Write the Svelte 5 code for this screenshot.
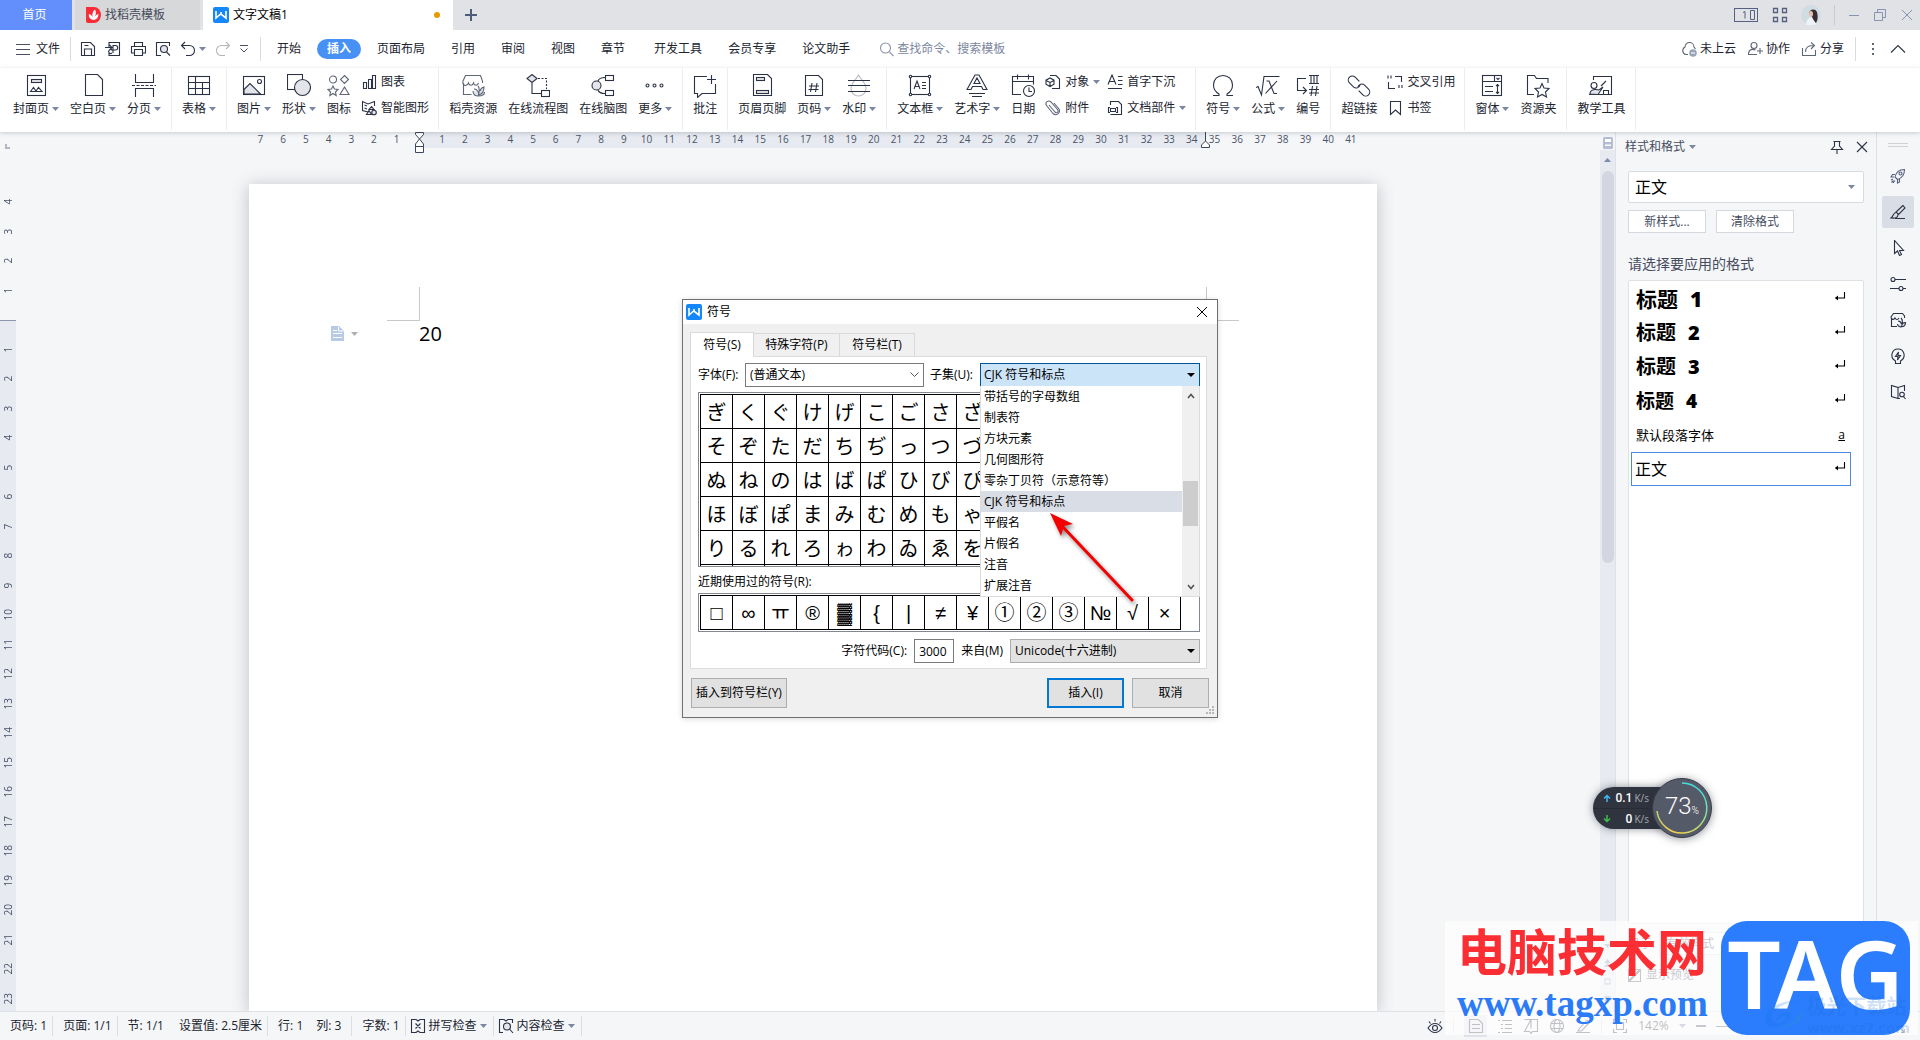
<script>
  const tabsMain = ['开始', '插入', '页面布局', '引用', '审阅', '视图', '章节'];
  const tabsExtra = ['开发工具', '会员专享', '论文助手'];

  const G = 'fill="#e3e5ea"';
  const icons = {
    cover: `<rect x="3.500" y="1.500" width="18" height="20"/><rect x="7.500" y="5.500" width="10" height="3" ${G}/><path d="M6.500 17.500l3-4 2.500 3.500 2.500-3.500 3.500 4z"/>`,
    blank: `<path d="M4.500.5h12l5 5v16h-17z"/>`,
    split: `<path d="M3.500 0v8.500h18V0M3.500 23v-8.500h18V23"/><path d="M0 11.500h24" stroke-dasharray="3 1.500"/>`,
    table: `<rect x="1.500" y="2.500" width="21" height="18"/><path d="M1.500 8.500h21M1.500 14.500h21M8.500 2.500v18M15.500 8.500v12"/>`,
    pic: `<rect x="1.500" y="2.500" width="21" height="18"/><path d="M2 15.500l6-6 10.500 10.500H2z" ${G}/><circle cx="17.500" cy="7.500" r="2"/>`,
    shape: `<rect x=".5" y=".5" width="15" height="15"/><circle cx="15.500" cy="13.500" r="8" ${G}/>`,
    iconset: `<g stroke="#5f6677"><circle cx="6" cy="5.500" r="3.500"/><path d="M17.500 1.500l4 4-4 4-4-4zM17.500 13l4.500 7.500h-9zM6 12l1.500 3 3.500.5-2.500 2.500.7 3.500L6 19.500 2.800 21.500l.7-3.500L1 15.500l3.500-.5z"/></g>`,
    docer: `<g stroke="#5f6677"><path d="M2.500 9v11.500h8M21.500 9V7l-2-5.500h-15L2 7c-1 5 4 6 5.500 2 1 3 4 3 5 0 1 3 4 3 5 0"/><path d="M13 15c3 0 4 2 4.500 4.500M17 12c2 2 1.500 5 .5 9 4-1 5.500-3 5.500-8-2 .5-3.500 2-4 4M12 17c0 3 2 5 5.500 5 4 0 6-2 6-4" ${G}/></g>`,
    flow: `<path d="M6 .5l5 4-5 4-5-4z" ${G}/><path d="M6 9v10.500h9"/><rect x="15.500" y="16.500" width="8" height="6"/><path d="M12 4.500h8.500V15" stroke-dasharray="2 1.500"/>`,
    mind: `<circle cx="5.500" cy="11.500" r="4.500" ${G}/><path d="M7 7c1-3 3-3.500 7-3.500M7 16c1 3 3 3.500 7 3.500"/><rect x="14.500" y="1.500" width="8" height="5"/><rect x="14.500" y="16.500" width="8" height="5"/>`,
    more: `<circle cx="4.500" cy="11.500" r="1.500"/><circle cx="11.500" cy="11.500" r="1.500"/><circle cx="18.500" cy="11.500" r="1.500"/>`,
    note: `<path d="M14 2.500H1.500v17h3v4l4.500-4h13.500V10M18.500 1v9M14 5.500h9"/>`,
    hf: `<path d="M3.500.5h14l4 4v17h-18z"/><rect x="6.500" y="3.500" width="8" height="3" ${G}/><rect x="6.500" y="16.500" width="12" height="3" ${G}/>`,
    pageno: `<path d="M3.500 1.500h13l4 4v16h-17z"/><path d="M10 9l-1.500 9M15 9l-1.500 9M7 12h10M6.500 15.500h10"/>`,
    water: `<path d="M11.500 1C9 6 4 9 4 14.500a7.500 7.500 0 0015 0C19 9 14 6 11.500 1z" stroke="#b9bcc6"/><path d="M1 6.500h22M1 11.500h22M1 17.500h22"/>`,
    textbox: `<rect x="2.500" y="2.500" width="19" height="18"/><path d="M6 15l3-8 3 8M7 12.500h4M14 8.500h4M14 11.500h4M14 14.500h4"/><g fill="#fff"><circle cx="2.500" cy="2.500" r="1.200"/><circle cx="21.500" cy="2.500" r="1.200"/><circle cx="2.500" cy="20.500" r="1.200"/><circle cx="21.500" cy="20.500" r="1.200"/></g>`,
    art: `<path d="M2 15.500L10 1h4l8 14.500h-4l-1.500-3h-9l-1.500 3zM9 9.500h6L12 4z"/><path d="M4 19.500h16M7 22.500h10"/>`,
    date: `<path d="M10 20.500H1.500v-18h21v8M1.500 7.500h21M6.500.5v5M17.500.5v5"/><circle cx="18" cy="17" r="5.500"/><path d="M18 13.500v4h3"/>`,
    omega: `<path d="M2 21.500h6V20C4.500 18 2.500 15 2.500 11c0-5.500 4-9.500 9.500-9.500s9.500 4 9.500 9.500c0 4-2 7-5.500 9v1.500h6"/>`,
    formula: `<path d="M0 13.500l2-1 3.500 8.500L8 2.500h15.500M10.500 7h2.500l5 12.500H21M21 7L9.500 19.500"/>`,
    number: `<path d="M10 4.500H1.500v12h8.500M7 13l3.500 3.500L7 20M13 1.500h10M13 9.500h10M15 1.500v8M18 1.500v8M21 1.500v8M16.500 12l-1.500 10M21 12l-1.500 10M13 15.500h10M13 19h10"/>`,
    link: `<g transform="rotate(45 12 12)"><path d="M9 8.500H3a4 4 0 000 8h6a4 4 0 003-6M15 15.500h6a4 4 0 000-8h-6a4 4 0 00-3 6"/></g>`,
    form: `<rect x="2.500" y="1.500" width="19" height="20"/><path d="M2.500 7.500h19M14.500 1.500v6M16.500 4l1.500 1.500L19.500 4M5 12.500h8M5 17.500h8M17.500 10.500v9M16 12l1.500-1.500L19 12M16 18l1.500 1.500L19 18"/>`,
    folder: `<path d="M8 20.500H1.500V1.500h7l2 3h11.500V9"/><path d="M16 9.500l2 4.500 5 .5-3.500 3.500 1 5-4.500-2.500-4.500 2.500 1-5L9 14.500l5-.5z"/>`,
    teach: `<path d="M4.500 6V2.500h18v18H0"/><circle cx="5" cy="11.500" r="3"/><path d="M1 20c0-5 6-5 9-4l4-3-5 7.500z" ${G}/><path d="M12 12l5-5M14.500 20v-3.500h5V20"/>`
  };
  const small = {
    chart: `<path d="M2.500 8.500h3v6h-3zM7.500 5.500h3v9h-3zM11.500 1.500h3v13h-3z"/>`,
    smart: `<path d="M7 12l-5.500-1.500V1.500L7 4l6.500-2.500V6M3.500 5l2.500 1M3.500 8l2.500 1"/><path d="M10.500 6.500l2.500 3h-5zM8 10.500l2.500 4H5.500z" ${G}/><circle cx="13" cy="12.500" r="2.300" ${G}/>`,
    object: `<path d="M5 1.500h6l3.500 3.500v9.500H7"/><path d="M5 4l4 2.200v4L5 12.500 1 10.200v-4zM1 6.500l4 2 4-2M5 8.500v4"/>`,
    clip: `<path d="M4 5l6 7c2 2 4-.5 2.500-2.500L6 2C3.500-.5-.5 2.500 1.500 5.500L8 13.500c3 3 8-.5 6-4.500L9 3" stroke="#5f6677"/>`,
    dropcap: `<path d="M1 10.500l4-9.500 4 9.500M2.500 7.500h5M11 2.500h4.500M11 6.500h4.500M11 10.500h4.500M1 14.500h14"/>`,
    parts: `<path d="M3.500 5V1.500h8l3 3v10h-11"/><path d="M3 7.500h-1.500v5H3M9 7.500h1.500v5H9M3.500 8.500h5v3h-5z"/>`,
    cross: `<path d="M8 2.500h6.500V8M1.500 8v6.500H8M1 1.500v3M4 1.500v3M12 11v3M15 11v3"/>`,
    mark: `<path d="M3.500 1.500h10v13l-5-4.500-5 4.500z"/>`,
    save: `<path d="M1.500 14.500v-13h9l4 4v9zM4.500 14v-6h7v6M4.500 4.500h4"/>`,
    export: `<path d="M4 6V1.500h10.500v13H4V11M0 6.500h6.500M4.500 4l2.500 2.500L4.500 9M8 12V4.500h2.500a2 2 0 010 4.500H7a2 2 0 100 3"/>`,
    print: `<path d="M4.500 5V1.500h8V5M4.500 12h-3V5.500h14V12h-3M4.500 8.500h8v6h-8z"/>`,
    preview: `<path d="M6 14.500H1.500v-13h13V5"/><circle cx="9" cy="8" r="3.500" ${G}/><path d="M11.500 11l3.500 3.500"/>`,
    undo: `<path d="M5 1L1.500 4.500 5 8M2 4.500h7.500a5 5 0 010 10H6"/>`,
    redo: `<path d="M11 1l3.500 3.500L11 8M14 4.500H6.500a5 5 0 000 10H10" stroke="#b3b5bb"/>`,
    cloud: `<path d="M7 13.500H5a4 4 0 01-1-7.500 4.500 4.500 0 019 0l1.500 2" stroke="#5f6677"/><circle cx="12" cy="12" r="3.800" fill="#9aa3b8" stroke="none"/><path d="M10 12h4" stroke="#fff"/>`,
    person: `<circle cx="7" cy="4.500" r="3" stroke="#5f6677"/><path d="M10 13.500H1.500c0-6 5-5.500 7-4.500M13 7v6M10 10h6" stroke="#5f6677"/>`,
    share: `<path d="M1.500 7v7.500h13V9M4.500 11c0-5 3-6.500 8-6.500M10 1.500l3.500 3L10 8" stroke="#5f6677"/>`,
    search: `<circle cx="6.500" cy="7" r="5" stroke="#8a93ab"/><path d="M10.500 11l4 4" stroke="#8a93ab"/>`,
    rocket: `<path d="M5 9c1-5 4-7.500 9.500-7.500C14.500 7 12 10 7.500 11.500zM5 6.500H2.500L1 9h3M9.500 11v3L7.500 15v-3M1 12l2-1M3 15l2-2.500M1.500 14.500l2-2" stroke="#56617f"/><circle cx="10.500" cy="5.500" r="1.500" stroke="#56617f"/>`,
    brush: `<path d="M13 1.500L6 8l2.500 2.500L15 4zM6 8.500c-3 0-2 3.500-5 5.500 4 .5 7 0 7-3.500M5 14.500h10"/>`,
    cursor: `<path d="M4.500.5v13l3-2.500 2 4.500 2-1-2-4h4z"/>`,
    sliders: `<circle cx="3" cy="3.500" r="2"/><path d="M5 3.500h11M0 12.500h9M13 12.500h3"/><circle cx="11" cy="12.500" r="2"/>`,
    store: `<path d="M1.500 6v8.500H7M14.500 6V4l-2-2.500h-9L1 5c0 3 3 3 4 1 1 2 3 2 4 0"/><path d="M8 9c2 0 3 1 3.500 3M11 6c2 2 2 4 .5 8.500M7.500 12c0 4 8 4 8-1.500-2 0-3 .5-3.500 2" ${G}/>`,
    bulb: `<path d="M5.500 15.500v-2.500C-.5 9.500 1.500 1 8 1s8.500 8.500 2.500 12v2.500zM8.500 4L5.500 8.500H8L7.500 12l3-4.500H8z"/>`,
    book: `<path d="M8 14V3.500L1.500 1.500v11L8 14.500h2M8 3.500l6.500-2V7"/><circle cx="12" cy="10.500" r="2.300"/><path d="M13.500 12.500L15.500 15"/>`,
    spell: `<path d="M6 1.500H1.500v13H6M10 1.500h4.500v13H10M6 1.500l2 1.500 2-1.500M6 14.500L8 13l2 1.500M5.500 5.500l5 5M10.500 5.500l-5 5"/>`,
    check: `<path d="M5 14.500H1.500v-13H6l2 1.500 2-1.500h4.500V5"/><circle cx="9" cy="8.500" r="3.500" ${G}/><path d="M11.500 11l3.500 4"/>`,
    eye: `<path d="M1 10c4-6 10-6 14 0-4 6-10 6-14 0zM2 3.500l1.500 2M8 1v2.500M14 3.500l-1.500 2"/><circle cx="8" cy="10" r="2.500"/>`,
    doc: `<path d="M1.500 1.500h9l4 4v9h-13zM4 6.500h8M4 10.500h8"/>`,
    outline: `<path d="M1 2.500h2M5 2.500h10M4 6.500h2M8 6.500h7M4 10.500h2M8 10.500h7M1 14.500h2M5 14.500h10"/>`,
    read: `<path d="M1.500 1.500H8v9M8 1.500h6.500v12h-5L8 15.500l-1.500-2h-5z"/>`,
    globe: `<circle cx="8" cy="8" r="6.500"/><ellipse cx="8" cy="8" rx="3" ry="6.500"/><path d="M2 5.500h12M2 10.500h12"/>`,
    pen: `<path d="M4 11l8-9 2.500 2.500-8 8.500H3zM1 14.500h14"/>`,
    fit: `<path d="M1.500 5V1.500H5M11 1.500h3.500V5M14.500 11v3.500H11M5 14.500H1.500V11M4.500 4.500h7v7h-7z"/>`,
    full: `<path d="M1.500 5V1.500H5M11 1.500h3.500V5M14.500 11v3.500H11M5 14.500H1.500V11M2 2l4 4M14 2l-4 4M14 14l-4-4M2 14l4-4"/>`,
    enter: `<path d="M13.500 4v6h-9" stroke="#000"/><path d="M7 7.500v5L4 10z" fill="#000" stroke="none"/>`
  };

  const groups = [
    [{ t: '封面页', i: 'cover', c: 1 }, { t: '空白页', i: 'blank', c: 1 }, { t: '分页', i: 'split', c: 1 }],
    [{ t: '表格', i: 'table', c: 1 }],
    [{ t: '图片', i: 'pic', c: 1 }, { t: '形状', i: 'shape', c: 1 }, { t: '图标', i: 'iconset' }, { stack: [{ t: '图表', i: 'chart' }, { t: '智能图形', i: 'smart' }] }],
    [{ t: '稻壳资源', i: 'docer' }, { t: '在线流程图', i: 'flow' }, { t: '在线脑图', i: 'mind' }, { t: '更多', i: 'more', c: 1 }],
    [{ t: '批注', i: 'note' }],
    [{ t: '页眉页脚', i: 'hf' }, { t: '页码', i: 'pageno', c: 1 }, { t: '水印', i: 'water', c: 1 }],
    [{ t: '文本框', i: 'textbox', c: 1 }, { t: '艺术字', i: 'art', c: 1 }, { t: '日期', i: 'date' },
      { stack: [{ t: '对象', i: 'object', c: 1 }, { t: '附件', i: 'clip' }] },
      { stack: [{ t: '首字下沉', i: 'dropcap' }, { t: '文档部件', i: 'parts', c: 1 }] }],
    [{ t: '符号', i: 'omega', c: 1 }, { t: '公式', i: 'formula', c: 1 }, { t: '编号', i: 'number' }],
    [{ t: '超链接', i: 'link' }, { stack: [{ t: '交叉引用', i: 'cross' }, { t: '书签', i: 'mark' }] }],
    [{ t: '窗体', i: 'form', c: 1 }, { t: '资源夹', i: 'folder' }],
    [{ t: '教学工具', i: 'teach' }]
  ];

  const hNums = [7, 6, 5, 4, 3, 2, 1, '', ...Array.from({ length: 41 }, (_, i) => i + 1)];
  const vNums = [4, 3, 2, 1, '', ...Array.from({ length: 23 }, (_, i) => i + 1)];

  const kana = [
    'ぎくぐけげこごさざしじすずせぜ',
    'そぞただちぢっつづてでとどなに',
    'ぬねのはばぱひびぴふぶぷへべぺ',
    'ほぼぽまみむめもゃやゅゆょよら',
    'りるれろゎわゐゑをんゔゕゖゝゞ'
  ].map((r) => [...r]);
  const recent = [...'□∞ㅠ®▓{|≠¥①②③№√×'];
  const subsets = ['带括号的字母数组', '制表符', '方块元素', '几何图形符', '零杂丁贝符（示意符等）', 'CJK 符号和标点', '平假名', '片假名', '注音', '扩展注音'];
  const quick = ['save', 'export', 'print', 'preview'];
  const tools = ['rocket', 'brush', 'cursor', 'sliders', 'store', 'bulb', 'book'];
  const views = ['doc', 'outline', 'read', 'globe', 'pen'];
  const heads = [1, 2, 3, 4];
</script>

{#snippet big(n)}<svg class="ic" width="24" height="24" viewBox="0 0 24 24" aria-hidden="true">{@html icons[n]}</svg>{/snippet}
{#snippet sm(n)}<svg class="ic" width="16" height="16" viewBox="0 0 16 16" aria-hidden="true">{@html small[n]}</svg>{/snippet}
{#snippet caret()}<svg class="caret" width="7" height="4" viewBox="0 0 7 4" aria-hidden="true"><path d="M0 0h7L3.500 4z" /></svg>{/snippet}
{#snippet logo()}<svg width="16" height="16" viewBox="0 0 16 16" aria-hidden="true"><rect width="16" height="16" rx="2" fill="#1687fb" /><path d="M3 4v7l4-3.500h1.500L13 11V4M8 8V5" fill="none" stroke="#fff" stroke-width="1.600" /></svg>{/snippet}

<div class="app">
  <header class="title">
    <button class="home">首页</button>
    <button class="doc grey">
      <svg width="15" height="16" viewBox="0 0 15 16" aria-hidden="true"><path d="M0 0h8a7 8 0 010 16H2a2 2 0 01-2-2z" fill="#fb2c37" /><path d="M7.500 13C3 12 2.500 9 3 7c2 .5 3 1.500 3.500 3C6 7 6.500 4.500 9 2.500c1.500 3 1 5-.5 7.500.8-1.500 2-2.500 4-3-.2 3.500-1.500 5.500-5 6z" fill="#fff" /></svg>
      找稻壳模板</button>
    <button class="doc open">{@render logo()}文字文稿1<i class="dot"></i></button>
    <button class="plus" aria-label="新建"><svg width="14" height="14" viewBox="0 0 14 14"><path d="M7 1v12M1 7h12" stroke="#4d5b7c" stroke-width="2" /></svg></button>
    <div class="wctl">
      <svg width="25" height="16" viewBox="0 0 25 16" fill="none" stroke="#56617f"><rect x=".5" y="1.500" width="23" height="13" /><path d="M9 5.500l2-1v7M16.500 3.500h4v9h-4z" /></svg>
      <svg width="16" height="16" viewBox="0 0 16 16" fill="none" stroke="#56617f" stroke-width="1.300"><path d="M1.500 1.500h4v4h-4zM10.500 1.500h4v4h-4zM1.500 10.500h4v4h-4zM10.500 10.500h4v4h-4z" /></svg>
      <svg width="20" height="20" viewBox="0 0 20 20"><circle cx="10" cy="10" r="10" fill="#cfdde3" /><path d="M5 20c0-5 3-8 6-8l4 7a10 10 0 01-10 1z" fill="#edf3f6" /><path d="M8 9c0-5 6-6 8-2 1 4 1 8-1 11-2-2-3-4-4-6z" fill="#3a2b33" /><ellipse cx="10" cy="9" rx="2" ry="3" fill="#e9c1b3" /></svg>
      <i class="vbar"></i>
      <svg width="12" height="14" viewBox="0 0 12 14"><path d="M1 7.500h10" stroke="#8793b3" /></svg>
      <svg width="14" height="14" viewBox="0 0 14 14" fill="none" stroke="#8793b3"><path d="M1.500 4.500h8v8h-8zM4.500 4V1.500h8v8H10" /></svg>
      <svg width="14" height="14" viewBox="0 0 14 14" stroke="#8793b3"><path d="M2 2l10 10M12 2L2 12" /></svg>
    </div>
  </header>

  <div class="menu">
    <button class="file"><svg width="14" height="12" viewBox="0 0 14 12" stroke="#4a5061"><path d="M0 1.500h14M0 6.500h14M0 11.500h14" /></svg>文件</button>
    <i class="vbar"></i>
    <div class="quick">
      {#each quick as q}<button aria-label={q}>{@render sm(q)}</button>{/each}
      <button aria-label="撤销" class="undo">{@render sm('undo')}{@render caret()}</button>
      <button aria-label="恢复">{@render sm('redo')}</button>
      <button aria-label="自定义"><svg width="8" height="8" viewBox="0 0 8 8" fill="none" stroke="#4a5061"><path d="M0 .5h8M.5 3.500L4 7l3.500-3.500" /></svg></button>
    </div>
    <i class="vbar"></i>
    <nav class="tabs">
      {#each tabsMain as t}<button class:on={t === '插入'}>{t}</button>{/each}
    </nav>
    <nav class="tabs extra">
      {#each tabsExtra as t}<button>{t}</button>{/each}
    </nav>
    <label class="find">{@render sm('search')}<input type="text" placeholder="查找命令、搜索模板" /></label>
    <div class="share">
      <button>{@render sm('cloud')}未上云</button>
      <button>{@render sm('person')}协作</button>
      <button>{@render sm('share')}分享</button>
      <i class="vbar"></i>
      <svg width="4" height="16" viewBox="0 0 4 16" fill="#5f6677"><path d="M1 2h2v2H1zM1 7h2v2H1zM1 12h2v2H1z" /></svg>
      <svg class="ic" width="16" height="16" viewBox="0 0 16 16"><path d="M1 11.500l7-7 7 7" /></svg>
    </div>
  </div>

  <div class="ribbon">
    {#each groups as g}
      <div class="group">
        {#each g as it}
          {#if it.stack}
            <div class="stack">
              {#each it.stack as s}<button>{@render sm(s.i)}<span>{s.t}</span>{#if s.c}{@render caret()}{/if}</button>{/each}
            </div>
          {:else}
            <button class="item">{@render big(it.i)}<span class="lbl">{it.t}{#if it.c}{@render caret()}{/if}</span></button>
          {/if}
        {/each}
      </div>
    {/each}
  </div>

  <main>
    <div class="vrule"><i class="ell"></i><div class="vnums">{#each vNums as n}<span>{n}</span>{/each}</div></div>
    <div class="center">
      <div class="column">
        <div class="hrule">
          <div class="hnums">{#each hNums as n}<span>{n}</span>{/each}</div>
          <svg class="ind left" width="9" height="22" viewBox="0 0 9 22" fill="#fff" stroke="#3c465c"><path d="M.5.5h8v2l-4 4.500-4-4.500zM.5 14.500v-2.500L4.500 7l4 5v2.500zM.5 14.500h8v6h-8z" /></svg>
          <svg class="ind right" width="9" height="16" viewBox="0 0 9 16" fill="#fff" stroke="#3c465c"><path d="M4.500 0v9M.5 15.500V13l4-4 4 4v2.500z" /></svg>
        </div>
        <div class="page">
          <i class="corner lt"></i><i class="corner rt"></i>
          <div class="line">
            <button aria-label="段落布局"><svg width="14" height="16" viewBox="0 0 14 16"><path d="M0 0h8l5 5v10H0z" fill="#b7cbe8" /><path d="M2 4.500h4M2 7.500h9M2 11.500h9M7.500 1v4h5" stroke="#fff" fill="none" /></svg>{@render caret()}</button>
            <p>20</p>
          </div>
        </div>
      </div>
    </div>
    <div class="vscroll">
      <svg width="12" height="14" viewBox="0 0 12 14"><rect x="1" y="1" width="10" height="12" rx="1.500" fill="#b4bdd4" /><path d="M3 3h6v3H3zM3 10V8.500h6V10" fill="#fff" /></svg>
      <div class="track"><svg width="7" height="4" viewBox="0 0 7 4"><path d="M0 4h7L3.500 0z" fill="#7f8bab" /></svg><i class="thumb"></i>
        <div class="jump">
          <svg width="7" height="4" viewBox="0 0 7 4"><path d="M0 0h7L3.500 4z" fill="#7f8bab" /></svg>
          <svg width="7" height="8" viewBox="0 0 7 8"><path d="M0 4h7L3.500 0zM0 8h7L3.500 4z" fill="#7f8bab" /></svg>
          <svg width="7" height="7" viewBox="0 0 7 7"><rect x="1" y="1" width="5" height="5" fill="none" stroke="#7f8bab" /></svg>
          <svg width="7" height="8" viewBox="0 0 7 8"><path d="M0 0h7L3.500 4zM0 4h7L3.500 8z" fill="#7f8bab" /></svg>
        </div>
      </div>
    </div>

    <aside class="panel">
      <div class="phead"><span>样式和格式</span>{@render caret()}
        <svg class="ic pin" width="14" height="14" viewBox="0 0 14 14"><path d="M3.500 1.500h7M4.500 1.500V6L1.500 9.500h11L9.500 6V1.500M7 9.500V14" /></svg>
        <svg class="ic" width="12" height="12" viewBox="0 0 12 12"><path d="M1 1l10 10M11 1L1 11" /></svg></div>
      <div class="cur"><select aria-label="当前样式"><option>正文</option></select>{@render caret()}</div>
      <div class="pbtns"><button>新样式...</button><button>清除格式</button></div>
      <h2>请选择要应用的格式</h2>
      <ul class="styles">
        {#each heads as h}<li class="head h{h}"><span>标题<b>{h}</b></span>{@render sm('enter')}</li>{/each}
        <li class="def"><span>默认段落字体</span><u>a</u></li>
        <li class="sel"><span>正文</span>{@render sm('enter')}</li>
      </ul>
      <div class="show"><label for="show">显示:</label><div class="showsel"><select id="show"><option>有效样式</option></select>{@render caret()}</div></div>
      <div class="prev"><label><input type="checkbox" checked />显示预览</label><a href="#smart"><svg width="14" height="14" viewBox="0 0 14 14"><path d="M3 1h8l3 4-7 8-7-8z" fill="#f7cf8a" /></svg>智能排版</a></div>
    </aside>
    <div class="side">
      <i class="grab"></i>
      {#each tools as t}<button class:on={t === 'brush'} aria-label={t}>{@render sm(t)}</button>{/each}
      <svg class="dots" width="16" height="6" viewBox="0 0 16 6" fill="none" stroke="#2b3245"><circle cx="3" cy="3" r="1.500" /><circle cx="8" cy="3" r="1.500" /><circle cx="13" cy="3" r="1.500" /></svg>
    </div>
  </main>

  <footer>
    <span>页码: 1</span><span>页面: 1/1</span><span class="s3">节: 1/1<b>设置值: 2.5厘米</b></span><span class="s4">行: 1<b>列: 3</b></span><span>字数: 1</span>
    <button>{@render sm('spell')}拼写检查{@render caret()}</button>
    <button>{@render sm('check')}内容检查{@render caret()}</button>
    <div class="view">
      {@render sm('eye')}<i class="vbar"></i>
      {#each views as v}<button class:on={v === 'doc'} aria-label={v}>{@render sm(v)}</button>{/each}
      <i class="vbar"></i>
      {@render sm('fit')}<span>142%</span>{@render caret()}
      <b class="minus"></b><input type="range" min="0" max="100" value="50" aria-label="缩放" /><b class="add">+</b>{@render sm('full')}
    </div>
  </footer>

  <div class="dialog" role="dialog" aria-label="符号">
    <div class="dtitle">{@render logo()}<span>符号</span><button aria-label="关闭"><svg width="12" height="12" viewBox="0 0 12 12" stroke="#000"><path d="M1 1l10 10M11 1L1 11" /></svg></button></div>
    <div class="dtabs"><button class="on">符号(S)</button><button>特殊字符(P)</button><button>符号栏(T)</button></div>
    <div class="dpanel">
      <div class="drow">
        <label class="l1" for="font">字体(F):</label>
        <div class="font"><select id="font"><option>(普通文本)</option></select><svg width="9" height="6" viewBox="0 0 9 6" fill="none" stroke="#555"><path d="M.5.5l4 4 4-4" /></svg></div>
        <label class="l2" for="subset">子集(U):</label>
        <div class="subset"><select id="subset"><option>CJK 符号和标点</option></select><svg width="8" height="4" viewBox="0 0 8 4"><path d="M0 0h8L4 4z" /></svg>
          <div class="drop">
            <ul role="listbox" aria-label="子集">{#each subsets as s, k}<li role="option" aria-selected={k === 5} class:on={k === 5}>{s}</li>{/each}</ul>
            <div class="dscroll"><svg width="8" height="6" viewBox="0 0 8 6" fill="none" stroke="#505050" stroke-width="1.500"><path d="M1 5l3-3.500L7 5" /></svg><i></i><svg width="8" height="6" viewBox="0 0 8 6" fill="none" stroke="#505050" stroke-width="1.500"><path d="M1 1l3 3.500L7 1" /></svg></div>
          </div>
        </div>
      </div>
      <div class="box chars"><table><tbody>{#each kana as r}<tr>{#each r as c}<td>{c}</td>{/each}</tr>{/each}<tr>{#each kana[0] as _}<td></td>{/each}</tr></tbody></table></div>
      <div class="rlabel">近期使用过的符号(R):</div>
      <div class="box recent"><table><tbody><tr>{#each recent as c}<td>{c}</td>{/each}</tr></tbody></table></div>
      <div class="code"><label for="code">字符代码(C):</label><input id="code" type="text" value="3000" /><label for="from">来自(M)</label>
        <div class="from"><select id="from"><option>Unicode(十六进制)</option></select><svg width="8" height="4" viewBox="0 0 8 4"><path d="M0 0h8L4 4z" /></svg></div></div>
    </div>
    <div class="dbtns"><button class="bar">插入到符号栏(Y)</button><button class="ok">插入(I)</button><button>取消</button></div>
    <svg class="grip" width="9" height="9" viewBox="0 0 9 9" fill="#b8b8b8"><path d="M6 0h2v2H6zM3 3h2v2H3zM6 3h2v2H6zM0 6h2v2H0zM3 6h2v2H3zM6 6h2v2H6z" /></svg>
  </div>

  <svg class="arrow" width="100" height="104" viewBox="0 0 100 104" aria-hidden="true"><path d="M92 93L22 19" stroke="#f40000" stroke-width="3" stroke-linecap="round" /><path d="M10 6l23 11-9 2-3 10z" fill="#f40000" /></svg>

  <div class="net">
    <div class="pill"><p><svg width="8" height="8" viewBox="0 0 8 8" fill="none" stroke="#40b6f5" stroke-width="1.500"><path d="M4 8V1.500M1 4.500l3-3 3 3" /></svg><b>0.1</b>K/s</p><p><svg width="8" height="8" viewBox="0 0 8 8" fill="none" stroke="#3cc04a" stroke-width="1.500"><path d="M4 0v6.500M1 3.500l3 3 3-3" /></svg><b>0</b>K/s</p></div>
    <div class="ball"><svg width="60" height="60" viewBox="0 0 60 60" fill="none" stroke-width="1.500"><defs><linearGradient id="ring" x1="0.7" y1="0" x2="0.3" y2="1"><stop offset="0" stop-color="#3fdde0" /><stop offset=".5" stop-color="#8fe090" /><stop offset="1" stop-color="#f3d34a" /></linearGradient></defs><path d="M30 5a25 25 0 11-25 28" stroke="url(#ring)" /></svg><span>73<small>%</small></span></div>
  </div>

  <div class="brand">
    <div class="words"><strong>电脑技术网</strong><em>www.tagxp.com</em></div>
    <div class="tag">TAG</div>
    <div class="ghost"><svg width="42" height="32" viewBox="0 0 42 32"><path d="M36 2C14 0-4 14 4 26c8 6 26-2 24-12-8-4-16 4-14 8 2-4 8-6 10-4-2 6-10 8-14 4C4 14 18 4 36 2z" fill="#0d6fe0" /><path d="M40 10c2 12-12 20-28 20 14-2 22-8 28-20z" fill="#26a6a0" /></svg><p>极光下载站<small>www.xz7.com</small></p></div>
  </div>
</div>

<style>
  :global(body) { margin: 0; }
  .app, .app :global(*) { box-sizing: border-box; }
  .app { position: relative; display: flex; flex-direction: column; height: 100vh; overflow: hidden; background: #f5f6f8; color: #20242f; font: 12px/16px "Open Sans", "Noto Sans CJK SC", sans-serif; }
  button { font: inherit; color: inherit; background: none; border: 0; padding: 0; margin: 0; display: flex; align-items: center; white-space: nowrap; }
  select, input { font: inherit; color: inherit; appearance: none; border-radius: 0; margin: 0; }
  ul, p, h2 { margin: 0; padding: 0; list-style: none; }
  svg { flex: none; display: block; }
  .ic { fill: none; stroke: #2b3245; stroke-width: 1.1; }
  .caret { fill: #7b86a3; }
  .vbar { width: 1px; height: 24px; background: #d9dbe0; flex: none; }

  .title { display: flex; height: 30px; background: #e1e2e5; flex: none; }
  .home { width: 72px; justify-content: center; background: #638ffc; color: #fff; margin-right: 3px; padding-right: 3px; }
  .doc { gap: 4px; }
  .grey { width: 125px; background: #d7d8da; padding-left: 11px; margin-right: 3px; color: #444a58; }
  .open { width: 250px; background: #fff; padding: 0 13px 0 10px; color: #000; }
  .dot { width: 6px; height: 6px; border-radius: 50%; background: #e69a00; margin-left: auto; }
  .plus { padding-left: 11px; }
  .wctl { display: flex; align-items: center; gap: 13px; margin-left: auto; padding-right: 6px; }
  .wctl .vbar { height: 20px; background: #c8cbd2; }

  .menu { display: flex; align-items: center; height: 38px; background: #fff; flex: none; }
  .file { width: 70px; padding-left: 16px; gap: 6px; }
  .quick { display: flex; align-items: center; gap: 9px; width: 189px; padding-left: 9px; }
  .undo { gap: 3px; }
  .tabs { display: flex; gap: 6px; padding-left: 6px; }
  .tabs button { height: 20px; padding: 0 10px; border-radius: 10px; }
  .tabs .on { background: #4791f5; color: #fff; font-weight: 700; }
  .extra { padding-left: 9px; }
  .find { display: flex; align-items: center; margin-left: 19px; gap: 2px; color: #7c86a0; }
  .find input { border: 0; padding: 0; width: 130px; background: none; }
  .find input::placeholder { color: #7c86a0; opacity: 1; }
  .share { display: flex; align-items: center; gap: 11px; margin-left: auto; padding-right: 14px; }
  .share button { gap: 3px; }
  .share > svg { margin-left: 4px; }

  .ribbon { display: flex; height: 64px; background: #fff; padding: 0 0 2px 3px; flex: none; box-shadow: 0 1px 4px rgba(60, 70, 90, .25); z-index: 2; }
  .group { display: flex; gap: 11px; padding: 0 10px; border-right: 1px solid #ededf0; }
  .item { flex-direction: column; padding-top: 6px; gap: 3px; justify-content: flex-start; }
  .lbl { display: flex; align-items: center; gap: 3px; }
  .stack { display: flex; flex-direction: column; gap: 10px; padding-top: 6px; margin: 0 -1px; }
  .stack + .stack { margin-left: -3px; }
  .stack button { gap: 4px; }

  main { display: flex; flex: 1; min-height: 0; }
  .vrule { width: 16px; flex: none; overflow: hidden; font-size: 10px; color: #4a5368; background: linear-gradient(#f5f6f8 188px, #8b96b0 188px, #8b96b0 189px, #e7eaf0 189px); }
  .ell { display: block; width: 5px; height: 5px; margin: 12px 0 38px 5px; border: solid #b3b7c2; border-width: 0 0 2px 2px; }
  .vnums { display: flex; flex-direction: column; height: 826px; }
  .vnums span { flex: 1; display: flex; align-items: center; justify-content: center; writing-mode: vertical-rl; transform: rotate(180deg); }
  .center { flex: 1; min-width: 0; display: flex; justify-content: center; padding-left: 10px; overflow: hidden; }
  .column { width: 1128px; display: flex; flex-direction: column; }
  .hrule { position: relative; height: 16px; flex: none; background: linear-gradient(90deg, transparent 170px, #e7eaf0 170px, #e7eaf0 957px, transparent 957px); }
  .hnums { display: flex; width: 1113px; font-size: 10px; line-height: 15px; color: #4a5368; }
  .hnums span { flex: 1; text-align: center; width: 0; }
  .ind { position: absolute; top: 0; }
  .left { left: 166px; }
  .right { left: 952px; }
  .page { position: relative; flex: 1; margin-top: 36px; padding-top: 136px; background: #fff; box-shadow: 0 2px 16px rgba(60, 65, 75, .3); }
  .corner { position: absolute; top: 103px; width: 33px; height: 34px; border: 0 solid #c9c9c9; }
  .lt { left: 138px; border-width: 0 1px 1px 0; }
  .rt { left: 957px; border-width: 0 0 1px 1px; }
  .line { display: grid; grid-template-columns: 170px 1fr; align-items: center; }
  .line button { padding-left: 82px; gap: 6px; }
  .line .caret { fill: #b0b0b0; }
  .line p { font-size: 20px; line-height: 28px; color: #000; }

  .vscroll { width: 15px; flex: none; display: flex; flex-direction: column; align-items: center; padding-top: 4px; }
  .track { flex: 1; width: 15px; background: #e7eaf1; display: flex; flex-direction: column; align-items: center; padding-top: 8px; }
  .thumb { width: 12px; height: 392px; border-radius: 6px; background: #d3d6e0; margin-top: 9px; }
  .jump { margin-top: auto; display: flex; flex-direction: column; gap: 11px; align-items: center; padding-bottom: 7px; }

  .panel { width: 261px; flex: none; border-left: 1px solid #dfe1e6; padding: 0 12px; display: flex; flex-direction: column; color: #454c5e; }
  .phead { display: flex; align-items: center; gap: 4px; height: 39px; padding-bottom: 9px; margin: 0 -4px 0 -3px; }
  .phead .pin { margin-left: auto; margin-right: 8px; }
  .cur, .showsel, .font, .subset, .from { position: relative; display: flex; align-items: center; }
  .cur select, .showsel select { width: 100%; background: #fff; border: 1px solid #d9dbe2; border-radius: 2px; }
  .cur select { height: 32px; padding: 0 6px; font-size: 16px; color: #000; }
  .cur .caret, .showsel .caret { position: absolute; right: 9px; }
  .pbtns { display: flex; gap: 10px; margin: 7px 0 22px; }
  .pbtns button { width: 78px; height: 23px; justify-content: center; background: #fff; border: 1px solid #d5d8df; }
  h2 { font: 14px/18px "Open Sans", "Noto Sans CJK SC", sans-serif; margin-bottom: 7px; }
  .styles { flex: 1; background: #fff; border: 1px solid #dfe1e6; border-radius: 2px; padding: 1px 12px 0 2px; color: #000; }
  .styles li { display: flex; justify-content: space-between; height: 34px; align-items: center; padding: 0 4px 0 5px; }
  .head { font-weight: 700; font-size: 20px; }
  .head b { margin-left: 12px; }
  .h1 { font-size: 21px; }
  .h4 { font-size: 19px; }
  .head svg, .sel svg { margin-bottom: 6px; }
  .styles .def { font-size: 13px; }
  .def u { font-size: 12px; margin-right: 2px; }
  .styles .sel { font-size: 16px; border: 1px solid #4a8be2; padding: 0 3px; }
  .show { display: flex; align-items: center; margin: 8px 0 12px; }
  .showsel { flex: 1; margin-left: 4px; }
  .showsel select { height: 23px; padding: 0 6px; }
  .prev { display: flex; justify-content: space-between; padding: 0 4px 28px 0; }
  .prev label, .prev a { display: flex; align-items: center; gap: 5px; color: inherit; text-decoration: none; }
  .prev a { color: #5a8df0; }
  .prev input { width: 13px; height: 13px; border: 1px solid #454c5e; background: linear-gradient(135deg, transparent 45%, #454c5e 45%, #454c5e 55%, transparent 55%); }
  .side { width: 44px; flex: none; border-left: 1px solid #dfe1e6; display: flex; flex-direction: column; align-items: center; gap: 4px; padding-right: 2px; }
  .grab { width: 20px; height: 4px; margin: 11px 0 9px; border: solid #d0d2d6; border-width: 1px 0; }
  .side button { width: 32px; height: 32px; justify-content: center; border-radius: 2px; }
  .side .on { background: #d9dde6; }
  .dots { margin: auto 0 14px; }

  footer { display: flex; align-items: center; height: 29px; border-top: 1px solid #dfe1e6; flex: none; }
  footer > span, footer > button { padding: 0 5px 0 10px; border-right: 1px solid #dcdee3; height: 20px; line-height: 20px; }
  footer b { font-weight: 400; }
  .s3 b { margin-left: 15px; }
  .s4 b { margin-left: 13px; }
  footer > .s4 { padding-right: 10px; }
  footer > button { gap: 3px; padding: 0 6px 0 4px; }
  .view { margin-left: auto; display: flex; align-items: center; gap: 10px; padding-right: 14px; }
  .view button { width: 16px; height: 22px; justify-content: center; }
  .view .on { background: #dfe2e8; width: 23px; }
  .view .vbar { height: 16px; }
  .minus { width: 10px; height: 2px; background: #454c5e; }
  .view input { width: 144px; height: 1px; background: #454c5e; }
  .view input::-webkit-slider-thumb { appearance: none; width: 12px; height: 12px; border: 1px solid #454c5e; border-radius: 50%; background: #fff; }
  .add { font-size: 18px; }

  .dialog { position: absolute; left: 682px; top: 299px; width: 536px; height: 419px; z-index: 5; background: #f0f0f0; border: 1px solid #707070; color: #000; box-shadow: 0 1px 6px rgba(0, 0, 0, .15); }
  .dtitle { display: flex; align-items: center; gap: 5px; height: 24px; background: #fff; padding: 0 9px 0 3px; }
  .dtitle button { margin-left: auto; }
  .dtabs { display: flex; align-items: flex-end; padding: 7px 0 0 7px; height: 32px; }
  .dtabs button { height: 23px; padding: 0 10px; justify-content: center; border: 1px solid #d9d9d9; border-width: 1px 1px 0 0; width: 86px; }
  .dtabs button:last-child { width: 75px; }
  .dtabs .on { width: 64px; height: 25px; margin-bottom: -1px; border-left-width: 1px; background: #fff; z-index: 1; }
  .dpanel { margin: 0 10px 0 7px; padding: 6px 6px 8px 7px; background: #fff; border: 1px solid #dcdcdc; height: 313px; }
  .drow { display: flex; align-items: center; height: 24px; margin-bottom: 5px; }
  .l1 { width: 47px; }
  .l2 { width: 50px; }
  .font { width: 179px; margin-right: 6px; }
  .font select, .subset select, .from select { width: 100%; height: 24px; padding: 0 4px; border: 1px solid #7a7a7a; background: #fff; }
  .font svg, .subset > svg, .from svg { position: absolute; right: 5px; }
  .subset { flex: 1; }
  .subset select { background: #cce4f7; border-color: #005499; padding: 0 3px; }
  .drop { position: absolute; top: 23px; left: 0; right: 0; z-index: 3; display: flex; background: #fff; border: 1px solid #dcdcdc; border-top: 0; height: 211px; }
  .drop ul { flex: 1; }
  .drop li { height: 21px; line-height: 21px; padding-left: 3px; }
  .drop .on { background: #d9dde6; }
  .dscroll { width: 17px; background: #f0f0f0; display: flex; flex-direction: column; align-items: center; justify-content: space-between; padding: 7px 0 6px; }
  .dscroll i { width: 15px; height: 45px; background: #cdcdcd; margin-top: 23px; }
  .box { border: 1px solid #828790; padding: 1px; overflow: hidden; }
  .chars { height: 175px; }
  table { border-collapse: collapse; table-layout: fixed; width: 481px; }
  td { border: 1px solid #000; height: 34px; padding: 0; text-align: center; font: 20px/24px "Noto Sans CJK JP", "DejaVu Sans", sans-serif; }
  .recent td { font-family: "Liberation Sans", "Noto Sans CJK JP", "DejaVu Sans", sans-serif; }
  .rlabel { height: 26px; line-height: 30px; }
  .code { display: flex; align-items: center; justify-content: flex-end; gap: 7px; margin-top: 7px; }
  .code input { width: 40px; height: 24px; border: 1px solid #7a7a7a; padding: 0 4px; background: #fff; }
  .from { width: 190px; }
  .from select { background: #e3e3e3; border-color: #adadad; }
  .dbtns { display: flex; gap: 8px; padding: 9px 8px 0 8px; }
  .dbtns button { width: 77px; height: 30px; justify-content: center; background: #e1e1e1; border: 1px solid #adadad; }
  .dbtns .bar { width: 96px; margin-right: auto; }
  .dbtns .ok { border: 2px solid #0078d7; }
  .grip { position: absolute; right: 2px; bottom: 2px; }
  .arrow { position: absolute; left: 1040px; top: 507px; z-index: 6; filter: drop-shadow(2px 3px 2px rgba(0, 0, 0, .45)); }

  .net { position: absolute; left: 1593px; top: 778px; z-index: 6; display: flex; align-items: center; }
  .pill { width: 86px; height: 42px; border-radius: 21px 0 0 21px; background: #2f343f; color: #a7abb4; font-size: 10px; box-shadow: 0 0 8px rgba(40, 45, 60, .5); }
  .pill p { display: flex; align-items: center; gap: 2px; height: 21px; width: 56px; padding-left: 10px; }
  .pill p + p { border-top: 1px solid #282c36; }
  .pill b { margin-left: auto; font: 500 12px/16px Roboto, sans-serif; color: #fff; }
  .ball { position: relative; width: 60px; height: 60px; margin-left: -27px; border-radius: 50%; background: #555a69; border: 1px solid #383c48; box-shadow: 0 1px 8px rgba(40, 45, 60, .5); display: flex; align-items: center; justify-content: center; color: #fff; font: 300 24px/24px Roboto, sans-serif; }
  .ball svg { position: absolute; left: -1px; top: -1px; }
  .ball small { font-size: 10px; }

  .brand { position: absolute; right: 2px; bottom: 5px; z-index: 7; display: flex; height: 114px; width: 473px; background: rgba(255, 255, 255, .7); }
  .words { display: flex; flex-direction: column; width: 276px; padding: 4px 0 0 12px; white-space: nowrap; }
  .words strong { font-size: 50px; line-height: 54px; color: #fb2f33; }
  .words em { font: 700 37px/46px "Liberation Serif", serif; color: #2c7bf6; padding-top: 2px; }
  .tag { width: 189px; height: 114px; border-radius: 26px; background: #2c7dfd; color: #fff; display: flex; align-items: center; justify-content: center; padding-bottom: 10px; font: 600 94px/94px "Noto Sans", sans-serif; }
  .ghost { position: absolute; right: 8px; bottom: 0; display: flex; align-items: center; gap: 2px; opacity: .2; color: #1068d8; font-weight: 700; }
  .ghost p { font-size: 20px; line-height: 24px; }
  .ghost small { display: block; font-size: 15px; line-height: 16px; }
</style>
